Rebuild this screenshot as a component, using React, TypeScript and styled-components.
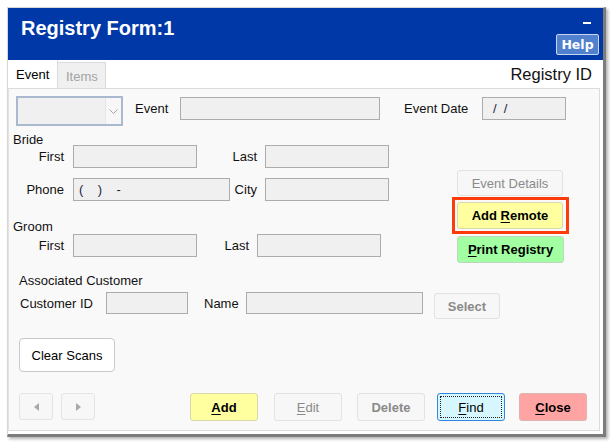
import React from 'react';
import styled, { createGlobalStyle, css } from 'styled-components';

type Variant = 'disabled' | 'yellow' | 'green' | 'red' | 'find' | 'plain';

const palette: Record<Variant, { bg: string; border: string; color: string }> = {
  disabled: { bg: '#f7f7f7', border: '#e2e2e2', color: '#8a8a8a' },
  yellow: { bg: '#ffffa0', border: '#d8d8aa', color: '#000' },
  green: { bg: '#a2ffa2', border: '#bcd8bc', color: '#000' },
  red: { bg: '#ffa3a3', border: '#dcb4b4', color: '#000' },
  find: { bg: '#d6f7ff', border: '#2f88dc', color: '#000' },
  plain: { bg: '#ffffff', border: '#c9c9c9', color: '#000' },
};

const GlobalStyle = createGlobalStyle`
  html, body {
    margin: 0;
    padding: 0;
    background: #ffffff;
  }
  body {
    font-family: "Liberation Sans", Arial, sans-serif;
    font-size: 13px;
    color: #111;
  }
`;

const Page = styled.div`
  width: 615px;
  height: 448px;
  padding: 7px 0 0 7px;
  box-sizing: border-box;
`;

const Window = styled.div`
  width: 595px;
  height: 426px;
  display: flex;
  flex-direction: column;
  background: #ffffff;
  border-left: 1px solid #d6d6d6;
  border-top: 1px solid #d6d6d6;
  border-right: 3px solid #7c7c7c;
  border-bottom: 3px solid #7c7c7c;
  box-shadow: 2px 2px 3px rgba(0, 0, 0, 0.3);
`;

const TitleBar = styled.div`
  height: 52px;
  flex: none;
  display: flex;
  justify-content: space-between;
  background: #0038a8;
`;

const Title = styled.h1`
  margin: 0;
  padding: 9px 0 0 13px;
  font-size: 20px;
  line-height: 23px;
  font-weight: 700;
  color: #ffffff;
`;

const TitleTools = styled.div`
  display: flex;
  flex-direction: column;
  align-items: flex-end;
`;

const MinimizeGlyph = styled.div`
  width: 8px;
  height: 2px;
  margin: 14px 12px 0 0;
  background: #ffffff;
`;

const HelpButton = styled.div`
  box-sizing: border-box;
  width: 43px;
  height: 21px;
  margin: 10px 4px 0 0;
  display: flex;
  align-items: center;
  justify-content: center;
  border: 1px solid #c9d6f2;
  border-radius: 2px;
  background: #5180cf;
  color: #ffffff;
  font-family: "DejaVu Sans", Verdana, sans-serif;
  font-size: 12.5px;
  font-weight: 700;
`;

const TabStrip = styled.div`
  height: 28px;
  flex: none;
  display: flex;
  align-items: flex-end;
`;

const Tab = styled.div<{ $active?: boolean }>`
  box-sizing: border-box;
  height: ${({ $active }) => ($active ? '28px' : '26px')};
  width: ${({ $active }) => ($active ? '50px' : '48px')};
  padding: ${({ $active }) => ($active ? '7px 0 0 8px' : '6px 0 0 8px')};
  font-size: 13px;
  line-height: 15px;
  ${({ $active }) =>
    $active
      ? css`
          background: #ffffff;
          color: #000;
          border-right: 1px solid #dcdcdc;
        `
      : css`
          background: #f0f0f0;
          color: #a3a3a3;
          border: 1px solid #dadada;
          border-bottom: none;
          border-left: none;
        `}
`;

const RegistryId = styled.div`
  margin: 0 11px 0 auto;
  align-self: center;
  font-size: 16.5px;
  line-height: 18px;
  color: #111;
`;

const Panel = styled.div`
  flex: 1;
  margin: 0 3px 3px 0;
  background: #f9f9f9;
  border: 1px solid #dcdcdc;
  border-left: 1px solid #e2e2e2;
  display: flex;
  flex-direction: column;
`;

const TopRow = styled.div`
  display: flex;
  align-items: flex-start;
  margin: 7px 0 0 7px;
`;

const CustomerRow = styled(TopRow)`
  margin: 6px 0 0 11px;
`;

const Combo = styled.div`
  width: 107px;
  height: 30px;
  box-sizing: border-box;
  display: flex;
  justify-content: flex-end;
  border: 2px solid #aab9d0;
  background: #f0f0f0;
`;

const ComboArrow = styled.div`
  width: 15px;
  display: flex;
  align-items: center;
  justify-content: center;
  background: #f7f7f7;
  border-left: 1px solid #e6e6e6;
`;

const FieldLabel = styled.div<{ $w: number; $pl?: number; $right?: boolean; $h?: number; $mt?: number }>`
  box-sizing: border-box;
  width: ${({ $w }) => $w}px;
  padding-left: ${({ $pl = 0 }) => $pl}px;
  padding-right: ${({ $right }) => ($right ? '1px' : '0')};
  height: ${({ $h = 23 }) => $h}px;
  line-height: ${({ $h = 23 }) => $h}px;
  margin-top: ${({ $mt = 0 }) => $mt}px;
  text-align: ${({ $right }) => ($right ? 'right' : 'left')};
  white-space: nowrap;
  color: #111;
`;

const Field = styled.div<{ $w: number; $ml?: number; $h?: number; $mt?: number; $pl?: number }>`
  box-sizing: border-box;
  width: ${({ $w }) => $w}px;
  height: ${({ $h = 23 }) => $h}px;
  margin-left: ${({ $ml = 0 }) => $ml}px;
  margin-top: ${({ $mt = 0 }) => $mt}px;
  padding-left: ${({ $pl = 5 }) => $pl}px;
  line-height: ${({ $h = 23 }) => $h - 2}px;
  border: 1px solid #acacac;
  background: #f0f0f0;
  color: #1c1c3c;
  white-space: pre;
`;

const SectionLabel = styled.div<{ $ml: number; $mt: number }>`
  margin: ${({ $mt }) => $mt}px 0 0 ${({ $ml }) => $ml}px;
  line-height: 11px;
  height: 11px;
`;

const MainArea = styled.div`
  display: flex;
`;

const LeftColumn = styled.div`
  width: 443px;
  display: flex;
  flex-direction: column;
`;

const RightColumn = styled.div`
  width: 117px;
  display: flex;
  flex-direction: column;
`;

const FormRow = styled.div<{ $mt: number }>`
  display: flex;
  align-items: center;
  margin-top: ${({ $mt }) => $mt}px;
`;

const ActionButton = styled.div<{
  $variant: Variant;
  $w: number;
  $h?: number;
  $bold?: boolean;
  $ml?: number;
  $mt?: number;
}>`
  box-sizing: border-box;
  flex: none;
  width: ${({ $w }) => $w}px;
  height: ${({ $h = 28 }) => $h}px;
  margin-left: ${({ $ml = 0 }) => $ml}px;
  margin-top: ${({ $mt = 0 }) => $mt}px;
  display: flex;
  align-items: center;
  justify-content: center;
  border-radius: 3px;
  font-size: 13px;
  font-weight: ${({ $bold }) => ($bold ? 700 : 400)};
  white-space: nowrap;
  background: ${({ $variant }) => palette[$variant].bg};
  border: 1px solid ${({ $variant }) => palette[$variant].border};
  color: ${({ $variant }) => palette[$variant].color};
  ${({ $variant }) =>
    $variant === 'find' &&
    css`
      outline: 1px dotted #222;
      outline-offset: -4px;
    `}
  u {
    text-decoration: underline;
    text-underline-offset: 2px;
  }
`;

const HighlightFrame = styled.div`
  box-sizing: border-box;
  width: 117px;
  height: 37px;
  margin-top: 1px;
  padding: 2px;
  border: 3px solid #ff3b0a;
`;

const ClearButton = styled(ActionButton)`
  margin: 19px 0 0 10px;
  border-radius: 4px;
`;

const BottomBar = styled.div`
  display: flex;
  align-items: flex-start;
  margin: 21px 0 0 10px;
`;

const NavButton = styled.div<{ $ml?: number }>`
  box-sizing: border-box;
  width: 34px;
  height: 27px;
  margin-left: ${({ $ml = 0 }) => $ml}px;
  display: flex;
  align-items: center;
  justify-content: center;
  background: #f7f7f7;
  border: 1px solid #e4e4e4;
  border-radius: 3px;
`;

const Triangle = ({ dir }: { dir: 'left' | 'right' }) => (
  <svg width="5" height="8" viewBox="0 0 5 8">
    <path d={dir === 'left' ? 'M5 0 L0 4 L5 8 Z' : 'M0 0 L5 4 L0 8 Z'} fill="#a8a8a8" />
  </svg>
);

const Chevron = () => (
  <svg width="9" height="5" viewBox="0 0 9 5">
    <path d="M0.5 0.5 L4.5 4.5 L8.5 0.5" fill="none" stroke="#a9a9a9" strokeWidth="1" />
  </svg>
);

export default function App() {
  return (
    <>
      <GlobalStyle />
      <Page>
        <Window>
          <TitleBar>
            <Title>Registry Form:1</Title>
            <TitleTools>
              <MinimizeGlyph />
              <HelpButton>Help</HelpButton>
            </TitleTools>
          </TitleBar>

          <TabStrip>
            <Tab $active>Event</Tab>
            <Tab>Items</Tab>
            <RegistryId>Registry ID</RegistryId>
          </TabStrip>

          <Panel>
            <TopRow>
              <Combo>
                <ComboArrow>
                  <Chevron />
                </ComboArrow>
              </Combo>
              <FieldLabel $w={57} $pl={12} $mt={1}>
                Event
              </FieldLabel>
              <Field $w={200} $mt={1} />
              <FieldLabel $w={102} $pl={24} $mt={1}>
                Event Date
              </FieldLabel>
              <Field $w={84} $mt={1} $pl={10}>
                {'/  /'}
              </Field>
            </TopRow>

            <MainArea>
              <LeftColumn>
                <SectionLabel $ml={4} $mt={8}>
                  Bride
                </SectionLabel>
                <FormRow $mt={0}>
                  <FieldLabel $w={56} $right>
                    First
                  </FieldLabel>
                  <Field $w={124} $ml={8} />
                  <FieldLabel $w={61} $right>
                    Last
                  </FieldLabel>
                  <Field $w={124} $ml={7} />
                </FormRow>
                <FormRow $mt={10}>
                  <FieldLabel $w={56} $right>
                    Phone
                  </FieldLabel>
                  <Field $w={157} $ml={8}>
                    {'(    )    -'}
                  </Field>
                  <FieldLabel $w={28} $right>
                    City
                  </FieldLabel>
                  <Field $w={124} $ml={7} />
                </FormRow>

                <SectionLabel $ml={4} $mt={20}>
                  Groom
                </SectionLabel>
                <FormRow $mt={2}>
                  <FieldLabel $w={56} $right>
                    First
                  </FieldLabel>
                  <Field $w={124} $ml={8} />
                  <FieldLabel $w={53} $right>
                    Last
                  </FieldLabel>
                  <Field $w={124} $ml={7} />
                </FormRow>
              </LeftColumn>

              <RightColumn>
                <ActionButton $variant="disabled" $w={106} $h={26} $ml={5} $mt={44}>
                  Event Details
                </ActionButton>
                <HighlightFrame>
                  <ActionButton $variant="yellow" $w={106} $h={27} $bold>
                    Add&nbsp;<u>R</u>emote
                  </ActionButton>
                </HighlightFrame>
                <ActionButton $variant="green" $w={107} $h={27} $ml={5} $mt={2} $bold>
                  <u>P</u>rint Registry
                </ActionButton>
              </RightColumn>
            </MainArea>

            <SectionLabel $ml={10} $mt={12}>
              Associated Customer
            </SectionLabel>
            <CustomerRow>
              <FieldLabel $w={86} $h={24}>
                Customer ID
              </FieldLabel>
              <Field $w={82} $h={22} />
              <FieldLabel $w={58} $pl={16} $h={24}>
                Name
              </FieldLabel>
              <Field $w={177} $h={22} />
              <ActionButton $variant="disabled" $w={66} $h={26} $ml={11} $mt={1} $bold>
                Select
              </ActionButton>
            </CustomerRow>

            <ClearButton $variant="plain" $w={96} $h={34}>
              Clear Scans
            </ClearButton>

            <BottomBar>
              <NavButton>
                <Triangle dir="left" />
              </NavButton>
              <NavButton $ml={8}>
                <Triangle dir="right" />
              </NavButton>
              <ActionButton $variant="yellow" $w={68} $ml={95} $bold>
                <u>A</u>dd
              </ActionButton>
              <ActionButton $variant="disabled" $w={68} $ml={16}>
                <u>E</u>dit
              </ActionButton>
              <ActionButton $variant="disabled" $w={68} $ml={15} $bold>
                Delete
              </ActionButton>
              <ActionButton $variant="find" $w={68} $ml={12}>
                <u>F</u>ind
              </ActionButton>
              <ActionButton $variant="red" $w={68} $ml={14} $bold>
                <u>C</u>lose
              </ActionButton>
            </BottomBar>
          </Panel>
        </Window>
      </Page>
    </>
  );
}
